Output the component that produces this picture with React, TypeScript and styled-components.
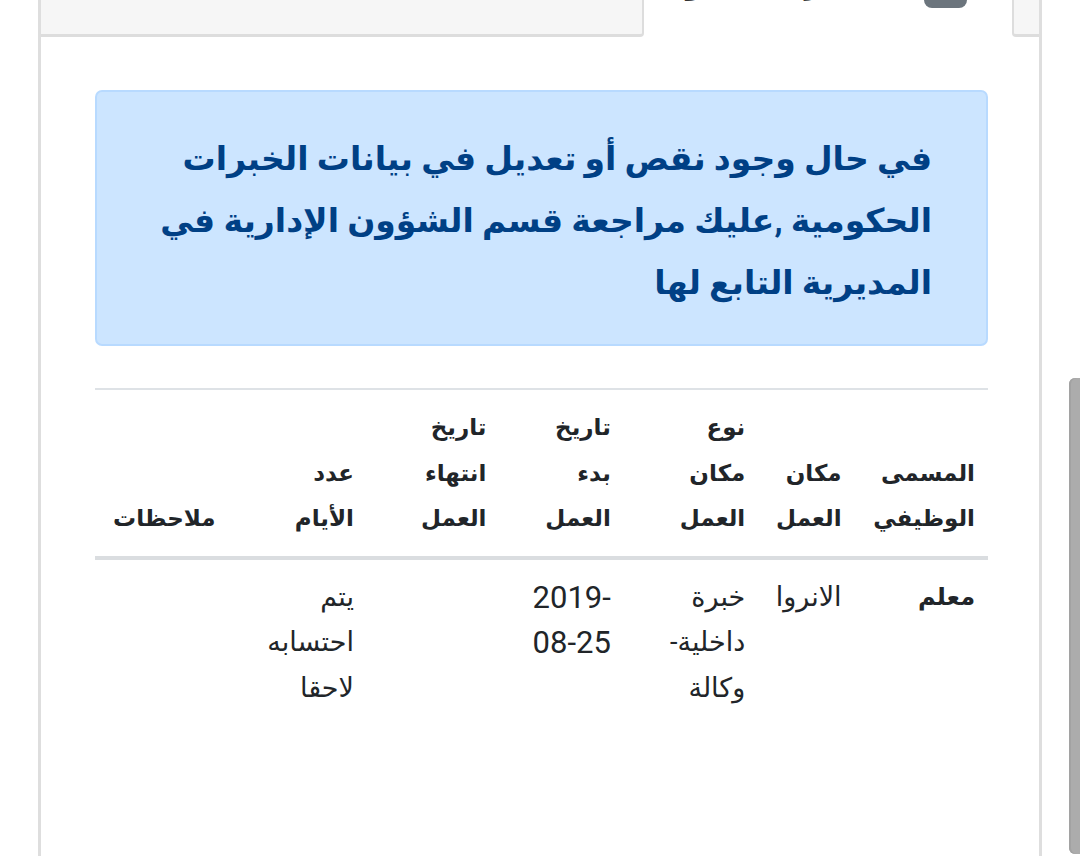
import React from "react";
import styled, { createGlobalStyle } from "styled-components";

const GlobalStyle = createGlobalStyle`
  html, body {
    margin: 0;
    padding: 0;
    background: #ffffff;
  }
  body {
    font-family: Roboto, "DejaVu Sans", sans-serif;
    color: #212529;
  }
`;

const Page = styled.div`
  position: relative;
  width: 1080px;
  height: 856px;
  overflow: hidden;
  direction: rtl;
`;

const Card = styled.section`
  margin: -43px 38px 0 38px;
  min-height: 900px;
  border-left: 3px solid #dedede;
  border-right: 3px solid #dedede;
  background: #fff;
`;

const Tabs = styled.nav`
  display: flex;
  height: 80px;
`;

const Tab = styled.div<{ $active?: boolean; $width?: number; $edge?: "start" | "end" }>`
  box-sizing: border-box;
  display: flex;
  align-items: flex-end;
  gap: 50px;
  ${(p) => (p.$width ? `width: ${p.$width}px; flex: none;` : "flex: 1;")}
  background: ${(p) => (p.$active ? "#ffffff" : "#f6f6f6")};
  border-bottom: ${(p) => (p.$active ? "none" : "3px solid #dddddd")};
  ${(p) => p.$edge === "end" && "border-left: 2px solid #dddddd; border-bottom-left-radius: 4px;"}
  ${(p) => p.$edge === "start" && "border-right: 2px solid #dddddd; border-bottom-right-radius: 4px;"}
  padding: ${(p) => (p.$active ? "0 45px 29px 0" : "0")};
  overflow: hidden;
`;

const Badge = styled.span`
  display: block;
  width: 43px;
  height: 38px;
  border-radius: 8px;
  background: #6c757d;
  flex: none;
`;

const TabLabel = styled.span`
  font-size: 28px;
  font-weight: bold;
  line-height: 30px;
  margin-bottom: 8px;
  color: #333;
  white-space: nowrap;
`;

const Body = styled.div`
  padding: 53px 51px 40px 54px;
`;

const Alert = styled.div`
  background: #cce5ff;
  border: 2px solid #b8daff;
  border-radius: 7px;
  color: #004085;
  font-size: 33px;
  font-weight: bold;
  line-height: 62px;
  padding: 36px 54px 30px 38px;
  margin-bottom: 42px;
`;

const Table = styled.table`
  width: 100%;
  table-layout: fixed;
  border-collapse: collapse;
  border-top: 2px solid #dee2e6;
  line-height: 45.5px;
`;

const Th = styled.th<{ $w: number }>`
  box-sizing: border-box;
  width: ${(p) => p.$w}px;
  text-align: right;
  vertical-align: bottom;
  font-size: 23px;
  font-weight: bold;
  padding: 15px 13px 14px 13px;
  border-bottom: 4px solid #dadde0;
`;

const Td = styled.td<{ $bold?: boolean; $num?: boolean }>`
  text-align: right;
  vertical-align: top;
  font-weight: ${(p) => (p.$bold ? "bold" : "normal")};
  font-size: ${(p) => (p.$num ? "31px" : p.$bold ? "24px" : "27px")};
  padding: 15px 13px;
`;

const Words = styled.span`
  display: block;
  width: min-content;
`;

const Scrollbar = styled.div`
  position: absolute;
  right: 0;
  top: 378px;
  width: 11px;
  height: 476px;
  border-radius: 6px 0 0 6px;
  background: #acacac;
  box-shadow: inset 2px 0 0 #a2a2a2;
`;

const columns = [
  { w: 133, head: "المسمى الوظيفي" },
  { w: 96, head: "مكان العمل" },
  { w: 134, head: "نوع مكان العمل" },
  { w: 124, head: "تاريخ بدء العمل" },
  { w: 132, head: "تاريخ انتهاء العمل" },
  { w: 138, head: "عدد الأيام" },
  { w: 133, head: "ملاحظات" },
];

const row = ["معلم", "الانروا", "خبرة داخلية- وكالة", "2019-08-25", "", "يتم احتسابه لاحقا", ""];

export default function App() {
  return (
    <>
      <GlobalStyle />
      <Page>
        <Card>
          <Tabs>
            <Tab $width={27} $edge="end" />
            <Tab $active $width={368}>
              <Badge />
              <TabLabel>الخبرات الحكومية</TabLabel>
            </Tab>
            <Tab $edge="start" />
          </Tabs>
          <Body>
            <Alert>
              في حال وجود نقص أو تعديل في بيانات الخبرات الحكومية ,عليك مراجعة قسم الشؤون الإدارية في
              المديرية التابع لها
            </Alert>
            <Table>
              <thead>
                <tr>
                  {columns.map((c) => (
                    <Th key={c.head} $w={c.w}>
                      <Words>{c.head}</Words>
                    </Th>
                  ))}
                </tr>
              </thead>
              <tbody>
                <tr>
                  {row.map((v, i) => (
                    <Td key={i} $bold={i === 0} $num={i === 3}>
                      <Words>{v}</Words>
                    </Td>
                  ))}
                </tr>
              </tbody>
            </Table>
          </Body>
        </Card>
        <Scrollbar />
      </Page>
    </>
  );
}
